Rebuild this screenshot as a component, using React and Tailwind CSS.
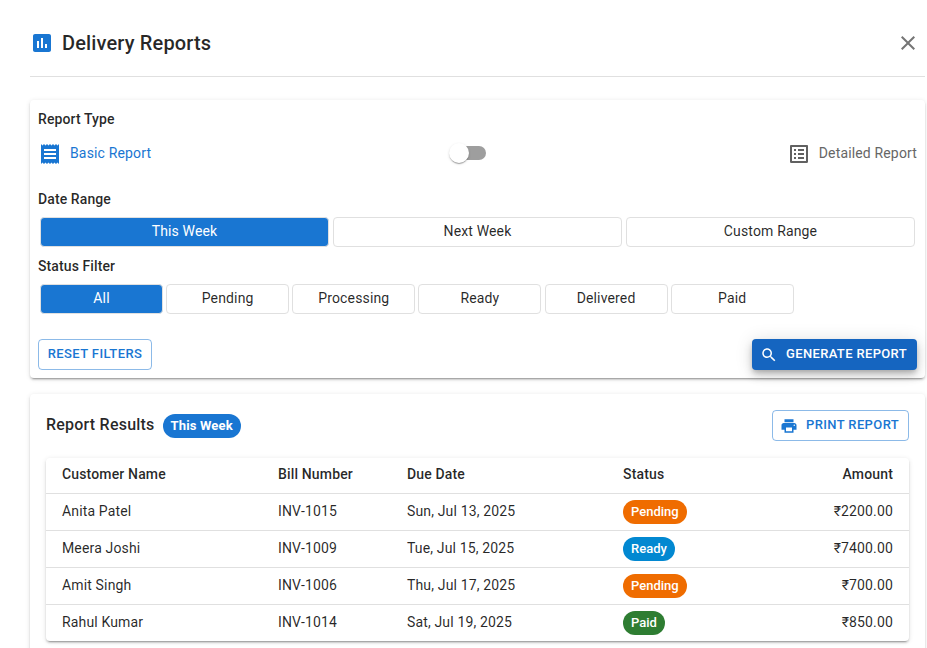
const rows = [
  { name: 'Anita Patel', bill: 'INV-1015', due: 'Sun, Jul 13, 2025', status: 'Pending', amount: '₹2200.00' },
  { name: 'Meera Joshi', bill: 'INV-1009', due: 'Tue, Jul 15, 2025', status: 'Ready', amount: '₹7400.00' },
  { name: 'Amit Singh', bill: 'INV-1006', due: 'Thu, Jul 17, 2025', status: 'Pending', amount: '₹700.00' },
  { name: 'Rahul Kumar', bill: 'INV-1014', due: 'Sat, Jul 19, 2025', status: 'Paid', amount: '₹850.00' },
];

const statusColors = {
  Pending: 'bg-[#ef6c00]',
  Ready: 'bg-[#0288d1]',
  Paid: 'bg-[#2e7d32]',
};

const Icon = ({ d, className }) => (
  <svg viewBox="0 0 24 24" fill="currentColor" className={className}>
    <path d={d} />
  </svg>
);

const icons = {
  assessment: 'M19 3H5c-1.1 0-2 .9-2 2v14c0 1.1.9 2 2 2h14c1.1 0 2-.9 2-2V5c0-1.1-.9-2-2-2zM9 17H7v-7h2v7zm4 0h-2V7h2v10zm4 0h-2v-4h2v4z',
  close: 'M19 6.41 17.59 5 12 10.59 6.41 5 5 6.41 10.59 12 5 17.59 6.41 19 12 13.41 17.59 19 19 17.59 13.41 12z',
  receipt: 'M18 17H6v-2h12v2zm0-4H6v-2h12v2zm0-4H6V7h12v2zM3 22l1.5-1.5L6 22l1.5-1.5L9 22l1.5-1.5L12 22l1.5-1.5L15 22l1.5-1.5L18 22l1.5-1.5L21 22V2l-1.5 1.5L18 2l-1.5 1.5L15 2l-1.5 1.5L12 2l-1.5 1.5L9 2 7.5 3.5 6 2 4.5 3.5 3 2v20z',
  listAlt: 'M19 5v14H5V5h14m1.1-2H3.9c-.5 0-.9.4-.9.9v16.2c0 .4.4.9.9.9h16.2c.4 0 .9-.5.9-.9V3.9c0-.5-.5-.9-.9-.9zM11 7h6v2h-6V7zm0 4h6v2h-6v-2zm0 4h6v2h-6zM7 7h2v2H7zm0 4h2v2H7zm0 4h2v2H7z',
  search: 'M15.5 14h-.79l-.28-.27C15.41 12.59 16 11.11 16 9.5 16 5.91 13.09 3 9.5 3S3 5.91 3 9.5 5.91 16 9.5 16c1.61 0 3.09-.59 4.23-1.57l.27.28v.79l5 4.99L20.49 19l-4.99-5zm-6 0C7.01 14 5 11.99 5 9.5S7.01 5 9.5 5 14 7.01 14 9.5 11.99 14 9.5 14z',
  print: 'M19 8H5c-1.66 0-3 1.34-3 3v6h4v4h12v-4h4v-6c0-1.66-1.34-3-3-3zm-3 11H8v-5h8v5zm3-7c-.55 0-1-.45-1-1s.45-1 1-1 1 .45 1 1-.45 1-1 1zm-1-9H6v4h12V3z',
};

const cardShadow = 'shadow-[0_3px_1px_-2px_rgba(0,0,0,0.2),0_2px_2px_0_rgba(0,0,0,0.14),0_1px_5px_0_rgba(0,0,0,0.12)]';

const Choice = ({ label, active, className }) => (
  <button
    className={`h-[30px] rounded border border-[#e0e0e0] pb-[2px] text-sm tracking-[0.15px] ${className} ${
      active ? 'bg-[#1976d2] text-white' : 'bg-white text-black/85'
    }`}
  >
    {label}
  </button>
);

export default function App() {
  return (
    <div className="h-[648px] overflow-hidden bg-white pl-[30px] pr-[2px] font-['Roboto',sans-serif] text-black/85">
      <div className="flex h-[77px] items-center justify-between border-b border-[#e0e0e0] pr-[5px] pt-[10px]">
        <div className="flex items-center gap-[8px]">
          <Icon d={icons.assessment} className="h-6 w-6 text-[#1976d2]" />
          <h2 className="text-xl font-medium tracking-[0.15px]">Delivery Reports</h2>
        </div>
        <Icon d={icons.close} className="h-6 w-6 text-[#757575]" />
      </div>

      <div className={`mt-[23px] h-[278px] rounded bg-white px-2 pt-[9px] ${cardShadow}`}>
        <p className="text-sm font-medium leading-[21px] tracking-[0.1px]">Report Type</p>
        <div className="mt-px flex h-[44px] items-center justify-between">
          <div className="flex items-center gap-[8px] text-sm tracking-[0.15px] text-[#1976d2]">
            <Icon d={icons.receipt} className="mt-[2px] h-6 w-6" />
            <span>Basic Report</span>
          </div>
          <div className="relative h-[14px] w-[34px] rounded-full bg-[#9e9e9e]">
            <span className="absolute left-[-3px] top-[-3px] h-5 w-5 rounded-full bg-white shadow-[0_2px_1px_-1px_rgba(0,0,0,0.2),0_1px_1px_0_rgba(0,0,0,0.14),0_1px_3px_0_rgba(0,0,0,0.12)]" />
          </div>
          <div className="flex items-center gap-2 text-sm tracking-[0.15px] text-[#666]">
            <Icon d={icons.listAlt} className="mt-[2px] h-6 w-6 text-[#616161]" />
            <span>Detailed Report</span>
          </div>
        </div>

        <p className="mt-[14px] text-sm font-medium leading-[21px] tracking-[0.1px]">Date Range</p>
        <div className="mt-[7px] flex gap-[4px] pl-[2px] pr-[2px]">
          <Choice label="This Week" active className="w-[289px]" />
          <Choice label="Next Week" className="w-[289px]" />
          <Choice label="Custom Range" className="w-[289px]" />
        </div>

        <p className="mt-[9px] text-sm font-medium leading-[21px] tracking-[0.1px]">Status Filter</p>
        <div className="mt-[7px] flex gap-[3.15px] pl-[2px]">
          <Choice label="All" active className="w-[123px]" />
          <Choice label="Pending" className="w-[123px]" />
          <Choice label="Processing" className="w-[123px]" />
          <Choice label="Ready" className="w-[123px]" />
          <Choice label="Delivered" className="w-[123px]" />
          <Choice label="Paid" className="w-[123px]" />
        </div>

        <div className="mt-[25px] flex items-center justify-between">
          <button className="h-[31px] w-[114px] rounded border border-[#1976d2]/50 pb-[2px] text-[13px] font-medium tracking-[0.4px] text-[#1976d2]">
            RESET FILTERS
          </button>
          <button className="flex h-[31px] w-[165px] items-center gap-[7px] rounded bg-[#1565c0] pl-[8px] text-[13px] font-medium tracking-[0.35px] text-white shadow-[0_3px_5px_-1px_rgba(0,0,0,0.2),0_6px_10px_0_rgba(0,0,0,0.14),0_1px_18px_0_rgba(0,0,0,0.12)]">
            <Icon d={icons.search} className="h-[18px] w-[18px]" />
            <span className="pb-[2px] pl-px">GENERATE REPORT</span>
          </button>
        </div>
      </div>

      <div className={`mt-4 rounded bg-white px-4 pb-4 pt-4 ${cardShadow}`}>
        <div className="flex h-[31px] items-center justify-between">
          <div className="flex items-center gap-2">
            <h3 className="pb-[2px] text-base font-medium tracking-[0.22px]">Report Results</h3>
            <span className="flex h-6 items-center rounded-full bg-[#1976d2] px-2 text-[13px] font-bold tracking-[0.15px] text-white">
              This Week
            </span>
          </div>
          <button className="flex h-[31px] w-[137px] items-center gap-[8px] rounded border border-[#1976d2]/50 pl-[7px] text-[13px] font-medium tracking-[0.38px] text-[#1976d2]">
            <Icon d={icons.print} className="h-[18px] w-[18px]" />
            <span className="pb-[2px]">PRINT REPORT</span>
          </button>
        </div>

        <div className={`mt-[17px] overflow-hidden rounded ${cardShadow}`}>
          <table className="w-full table-fixed border-collapse text-sm tracking-[0.15px]">
            <colgroup>
              <col className="w-[216px]" />
              <col className="w-[129px]" />
              <col className="w-[216px]" />
              <col className="w-[130px]" />
              <col />
            </colgroup>
            <thead>
              <tr className="h-[35px] border-b border-[#e0e0e0] text-left">
                <th className="px-4 pb-[3px] font-medium">Customer Name</th>
                <th className="px-4 pb-[3px] font-medium">Bill Number</th>
                <th className="px-4 pb-[3px] font-medium">Due Date</th>
                <th className="px-4 pb-[3px] font-medium">Status</th>
                <th className="px-4 pb-[3px] text-right font-medium">Amount</th>
              </tr>
            </thead>
            <tbody>
              {rows.map((row, i) => (
                <tr key={row.bill} className={`h-[37px] ${i < rows.length - 1 ? 'border-b border-[#e0e0e0]' : ''}`}>
                  <td className="px-4 pb-[2px]">{row.name}</td>
                  <td className="px-4 pb-[2px]">{row.bill}</td>
                  <td className="px-4 pb-[2px]">{row.due}</td>
                  <td className="px-4">
                    <span className={`inline-flex h-6 items-center rounded-full px-2 pt-px align-middle text-[13px] font-medium tracking-normal text-white ${statusColors[row.status]}`}>
                      {row.status}
                    </span>
                  </td>
                  <td className="px-4 pb-[2px] text-right">{row.amount}</td>
                </tr>
              ))}
            </tbody>
          </table>
        </div>
      </div>
    </div>
  );
}
